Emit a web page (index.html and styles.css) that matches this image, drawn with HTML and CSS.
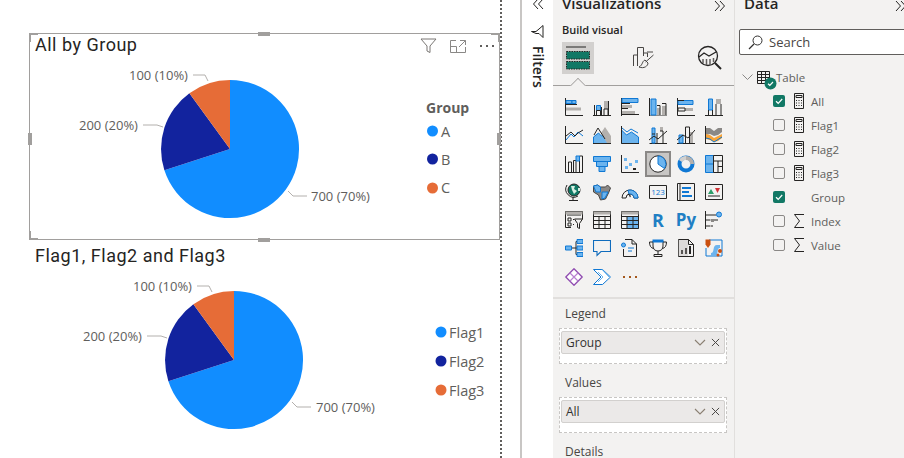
FILE: index.html
```html
<!DOCTYPE html>
<html lang="en">
<head>
    <meta charset="UTF-8">
    <title>Report view</title>
    <link rel="stylesheet" href="styles.css">
</head>
<body>
<svg class="defs" width="0" height="0">
    <symbol id="calc" viewBox="0 0 12 16">
        <path d="M1.5.5h9v15h-9z" fill="none" stroke="#252423"/>
        <path d="M3 2.500h6v2H3z" fill="none" stroke="#252423"/>
        <path d="M3 7h1v1H3zM5.500 7h1v1h-1zM8 7h1v1H8zM3 9.500h1v1H3zM5.500 9.500h1v1h-1zM8 9.500h1v1H8zM3 12h1v1H3zM5.500 12h1v1h-1zM8 12h1v1H8z" fill="#252423"/>
    </symbol>
    <symbol id="sigma" viewBox="0 0 12 16">
        <path d="M11 1.500H1.500l5 6.500-5 6.500H11" fill="none" stroke="#252423"/>
    </symbol>
    <symbol id="drop" viewBox="0 0 12 8">
        <path d="M1 1l5 5 5-5" fill="none" stroke="#8a7f72" stroke-width="1.100"/>
    </symbol>
    <symbol id="cross" viewBox="0 0 10 10">
        <path d="M1 1l8 8M9 1l-8 8" fill="none" stroke="#484644" stroke-width="1.100"/>
    </symbol>
    <symbol id="tick" viewBox="0 0 12 12">
        <rect width="12" height="12" rx="2" fill="#117865"/>
        <path d="M3 6.200l2.200 2.100L9.200 4" fill="none" stroke="#fff" stroke-width="1.200"/>
    </symbol>
</svg>

<!-- Report canvas -->
<main class="canvas">
    <section class="visual selected">
        <span class="corner tl"></span>
        <span class="corner tr"></span>
        <span class="corner bl"></span>
        <span class="grip top"></span>
        <span class="grip bottom"></span>
        <span class="grip left"></span>
        <span class="grip right"></span>
        <div class="visual-head">
            <h2 class="visual-title">All by Group</h2>
            <div class="visual-tools">
                <svg width="17" height="16" viewBox="0 0 17 16"><path d="M1 1h15l-6 7v6.500l-3-1.500V8z" fill="none" stroke="#7a7774"/></svg>
                <svg width="16" height="13" viewBox="0 0 16 13"><path d="M6 .5H.5v12h15V7M.5 6.500h6v6M10 .5h5.500V5M15.500.5L9 7" fill="none" stroke="#8a8886"/></svg>
                <svg width="16" height="4" viewBox="0 0 16 4"><path d="M1 1h2v2H1zM7 1h2v2H7zM13 1h2v2h-2z" fill="#605e5c"/></svg>
            </div>
        </div>
        <svg class="chart" width="470" height="170" viewBox="29 67 470 170">
            <path d="M230 149V80A69 69 0 1 1 164.400 170.300z" fill="#118dff"/>
            <path d="M230 149L164.400 170.300A69 69 0 0 1 189.400 93.200z" fill="#12239e"/>
            <path d="M230 149L189.400 93.200A69 69 0 0 1 230 80z" fill="#e66c37"/>
            <path class="leader" d="M193 75h12l3 6M143 125h14l6 2M288 191l5 5h14"/>
            <text class="label" x="129" y="80">100 (10%)</text>
            <text class="label" x="79" y="130">200 (20%)</text>
            <text class="label" x="311" y="201">700 (70%)</text>
            <text class="legend-head" x="426" y="113">Group</text>
            <circle cx="432.500" cy="131" r="5.500" fill="#118dff"/>
            <text class="legend" x="441" y="137">A</text>
            <circle cx="432.500" cy="159" r="5.500" fill="#12239e"/>
            <text class="legend" x="441" y="165">B</text>
            <circle cx="432.500" cy="188" r="5.500" fill="#e66c37"/>
            <text class="legend" x="441" y="193">C</text>
        </svg>
    </section>
    <section class="visual">
        <div class="visual-head">
            <h2 class="visual-title">Flag1, Flag2 and Flag3</h2>
        </div>
        <svg class="chart" width="470" height="170" viewBox="29 278 470 170">
            <path d="M234 360V291A69 69 0 1 1 168.400 381.300z" fill="#118dff"/>
            <path d="M234 360L168.400 381.300A69 69 0 0 1 193.400 304.200z" fill="#12239e"/>
            <path d="M234 360L193.400 304.200A69 69 0 0 1 234 291z" fill="#e66c37"/>
            <path class="leader" d="M197 286h12l3 6M147 336h14l6 2M292 402l5 5h14"/>
            <text class="label" x="133" y="291">100 (10%)</text>
            <text class="label" x="83" y="341">200 (20%)</text>
            <text class="label" x="316" y="412">700 (70%)</text>
            <circle cx="441" cy="332" r="5.500" fill="#118dff"/>
            <text class="legend" x="449" y="338">Flag1</text>
            <circle cx="441" cy="361" r="5.500" fill="#12239e"/>
            <text class="legend" x="449" y="367">Flag2</text>
            <circle cx="441" cy="390" r="5.500" fill="#e66c37"/>
            <text class="legend" x="449" y="396">Flag3</text>
        </svg>
    </section>
</main>

<!-- Filters pane (collapsed) -->
<aside class="filters">
    <svg class="chev-back" width="12" height="10" viewBox="0 0 12 10"><path d="M6 0L1.500 5 6 10M11 0L6.500 5 11 10" fill="none" stroke="#252423"/></svg>
    <svg width="13" height="13" viewBox="0 0 13 13"><path d="M12 .5v12L8 8.500H5L.5 6.500H5L8 4z" fill="none" stroke="#252423"/></svg>
    <span class="filters-label">Filters</span>
</aside>

<!-- Visualizations pane -->
<aside class="viz">
    <div class="pane-head">
        <h1>Visualizations</h1>
        <svg width="12" height="10" viewBox="0 0 12 10"><path d="M1 0l4.500 5L1 10M6 0l4.500 5L6 10" fill="none" stroke="#252423"/></svg>
    </div>
    <div class="build-label">Build visual</div>
    <div class="tabs">
        <div class="tab active">
            <svg width="26" height="26" viewBox="0 0 26 26">
                <path d="M1 2h20" stroke="#252423"/>
                <rect x="1.500" y="6.500" width="23" height="7.500" fill="#117865" stroke="#252423" stroke-dasharray="1.500 1"/>
                <rect x="1.500" y="16.500" width="23" height="7.500" fill="#117865" stroke="#252423" stroke-dasharray="1.500 1"/>
            </svg>
        </div>
        <div class="tab">
            <svg width="24" height="24" viewBox="0 0 24 24" fill="none" stroke="#484644">
                <path d="M1.500 20v-11h4v11M5.500 15V1.500h6V10M11.500 7h4v4M15 6h6"/>
                <path d="M21.500 9l-8 7M13 14c-3 1-2 5-6 7 5 2 9-1 9-4z"/>
            </svg>
        </div>
        <div class="tab">
            <svg width="26" height="26" viewBox="0 0 26 26" fill="none" stroke="#252423">
                <circle cx="11" cy="11" r="9.500" stroke-width="1.300"/>
                <path d="M2 12l5-4 5 3 7-4" stroke-width="1.300"/>
                <path d="M6 14v4M9.500 14v6M13 14v6M16.500 13v4" stroke="#605e5c" stroke-width="1.500"/>
                <path d="M18 18l6 6" stroke-width="2"/>
            </svg>
        </div>
        <span class="notch"></span>
    </div>

    <div class="icon-grid">
        <svg viewBox="0 0 18 18"><path class="ax" d="M.5 0v17.500H18"/><path class="bl" d="M1 2.500h6v3H1z"/><path class="bl" d="M7 2.500h4v3H7z"/><path class="gr" d="M1 9.500h8v3H1zM9 9.500h7v3H9z"/><path class="ax" d="M.5 6.500H12"/></svg>
        <svg viewBox="0 0 18 18"><path class="ax" d="M0 17.500h18M1.500 7v10.500M8.500 9v8.500M15.500 3v14.500"/><path class="bl" d="M3.500 7.500h4v5h-4z"/><path class="ax" d="M3.500 12.500h4v5h-4z"/><path class="gr" d="M11 3h4v8h-4z"/><path class="ax" d="M11 11h4v6.500h-4z"/></svg>
        <svg viewBox="0 0 18 18"><path class="ax" d="M.5 0v18"/><path class="bl" d="M1 .5h16v4H1z"/><path class="gr" d="M1 7h10v3H1zM1 13h13v3H1z"/><path class="ax" d="M1 5.500h8M1 10.500h6M1 16.500h17"/></svg>
        <svg viewBox="0 0 18 18"><path class="ax" d="M.5 0v18H18"/><path class="bl" d="M2 1h5v16H2z"/><path class="gr" d="M8 10h3v7H8zM13 8h4v9h-4z"/><path class="ax" d="M8 7.500h3V17M13 5.500h4V17"/></svg>
        <svg viewBox="0 0 18 18"><path class="ax" d="M.5 0v17.500H18"/><path class="bl" d="M1 2.500h15v4H1z"/><path class="gr" d="M8 10h8v3H8z"/><path class="ax" d="M1 2.500h6M1 13h7V10H1z"/></svg>
        <svg viewBox="0 0 18 18"><path class="ax" d="M0 17.500h18"/><path class="bl" d="M3.500 1h4v11h-4z"/><path class="ax" d="M3.500 12v5.500h4V12"/><path class="gr" d="M11 1h5v5h-5z"/><path class="ax" d="M11 6v11.500h5V6"/></svg>

        <svg viewBox="0 0 18 18"><path class="ax" d="M.5 0v17.500H18"/><path class="ln" d="M1 14l5-6 3 3 4-5 5 4"/><path class="ax" d="M1 10l5-4 4 4 3-3 5-3"/></svg>
        <svg viewBox="0 0 18 18"><path class="bl" d="M.5 17.500V11l5-4 3 3 4-1 5 5v3.500z"/><path class="gr" d="M8 7l4-6 6 9v7h-4z"/><path class="ax" d="M1 9l4-7 7 11"/><path class="ax" d="M0 17.500h18"/></svg>
        <svg viewBox="0 0 18 18"><path class="bl" d="M.5 4l5 5 5-3 7 5v6.500H.500z"/><path class="ax" d="M.5 0v17.500H18"/><path class="ln" d="M1 2l5 4 4-3 7 4"/></svg>
        <svg viewBox="0 0 18 18"><path class="ax" d="M.5 17.500H18"/><path class="bl" d="M3 2h3v15H3z"/><path class="gr" d="M11 1h3v4h-3z"/><path class="ax" d="M3 8h3M11 5h3v12.500M8 17V7"/><path class="ax" d="M0 14l5-4 4 3 9-8"/></svg>
        <svg viewBox="0 0 18 18"><path class="ax" d="M0 17.500h18"/><path class="bl" d="M2 9h4v8H2z"/><path class="ax" d="M8.500 17V1h4v16"/><path class="gr" d="M13 6h3v11h-3z"/><path class="ax" d="M0 14l6-5 5 3 7-8"/></svg>
        <svg viewBox="0 0 18 18"><path class="ax" d="M.5 0v18M0 17.500h18"/><path d="M1 2h4l4 3 4-3h4v4l-4 3-4 1-4-2-4 1z" fill="#8a8886"/><path d="M1 8l4 1 4 3 4-2 4-2v4l-4 3-4 1-4-2-4-1z" fill="#f7a43a"/><path class="ln" d="M1 12l4 1 4 3 8-5"/></svg>

        <svg viewBox="0 0 18 18"><path class="ax" d="M.5 1v16.500H18M3.500 17V7h3v10M8.500 17V5.500H11V17M14.500 17V1h3v16"/><path class="bl" d="M11 1h3.500v5H11z"/></svg>
        <svg viewBox="0 0 18 18"><path class="bl" d="M.5 1.500h17v5H.500zM3.500 6.500h11v5h-11zM6 11.500h6v5H6z"/></svg>
        <svg viewBox="0 0 18 18"><path class="ax" d="M.5 0v17.500H18"/><path d="M3 3h3v3H3zM14 5h3v3h-3zM8 8h3v3H8zM4 11h3v3H4z" fill="#6cb4ee"/><path d="M12 13h3v2h-3z" fill="#252423"/></svg>
        <span class="cell-on"><svg viewBox="0 0 18 18"><circle cx="9" cy="9" r="8.200" fill="#fff" stroke="#252423"/><path class="bl" d="M9 1a8 8 0 0 1 6.500 12.500L9 9z"/></svg></span>
        <svg viewBox="0 0 18 18"><circle cx="9" cy="9" r="6.500" fill="none" stroke="#0f78d4" stroke-width="4"/><path d="M9 1a8 8 0 0 1 8 8h-4a4 4 0 0 0-4-4z" fill="#b3b0ad"/><path d="M9 1a8 8 0 0 0-7 4l3 2a4 4 0 0 1 4-2z" fill="#d2d0ce"/></svg>
        <svg viewBox="0 0 18 18"><path class="bl" d="M.5.500h8v17h-8z"/><path d="M.5 9h8" stroke="#0f78d4"/><path class="ax" d="M8.500.5h9v17h-9zM8.500 6h9M13 6v11.500M13 11.500h4.500"/></svg>

        <svg viewBox="0 0 18 18"><circle cx="9" cy="7" r="6" fill="#117865"/><circle cx="9" cy="7" r="6" fill="none" stroke="#252423"/><path d="M6 3h4l-1 3 3 2-3 3-2-4zM13 5h2v3h-2z" fill="#d8efe2"/><path class="ax" d="M2 2a8 8 0 0 0 11 11M8 14v3M4 17.500h9"/></svg>
        <svg viewBox="0 0 18 18"><path d="M.5 3l4-1 3 2h5l2-2 3 3-2 5-3 6-5 1-2-5-5-3z" fill="#8a8886" stroke="#484644"/><path d="M.5 3l4-1 3 2v5H3z" fill="#6cb4ee" stroke="#0f78d4"/><path d="M9 9h6l-3 6-3 1z" fill="#6cb4ee" stroke="#0f78d4"/></svg>
        <svg viewBox="0 0 18 18"><path class="ax" d="M1 15a8 8 0 0 1 16 0h-4a4 4 0 0 0-8 0z"/><path class="bl" d="M7 7.200a8 8 0 0 1 10 7.800h-4a4 4 0 0 0-5-4z"/><path d="M7 10l3 3-1 1.500z" fill="#252423"/></svg>
        <svg viewBox="0 0 18 18"><path class="ax" d="M.5 2.500h17v13H.500z"/><text class="tile-num" x="9" y="12" text-anchor="middle">123</text></svg>
        <svg viewBox="0 0 18 18"><path class="ax" d="M.5.500h17v17H.500z"/><path d="M3 1v16" stroke="#252423"/><path d="M5 4h9v2H5zM5 8h7v2H5zM5 12h10v2H5z" fill="#0f78d4"/></svg>
        <svg viewBox="0 0 18 18"><path class="ax" d="M.5 1.500h17v15H.500z"/><path d="M3 11l3-5 3 5z" fill="#2e9e6a"/><path d="M10 5h5l-2.500 5z" fill="#d13438"/><path d="M3 13h12" stroke="#252423"/></svg>

        <svg viewBox="0 0 18 18"><path class="ax" d="M.5 16.500V.5h17V8M.5 16.500H6M2 4h14"/><path d="M.5.500h17v3H.500z" fill="#b3b0ad"/><path class="ax" d="M3 7h3v3H3zM3 12h3v3H3zM8 8.500h1M8 13.500h1M9.500 8h8l-3 4.500v5l-2-1v-4z"/></svg>
        <svg viewBox="0 0 18 18"><path class="ax" d="M.5.500h17v17H.500zM.5 5.500h17M.5 9.500h17M.5 13.500h17M6 5.500v12M12 5.500v12"/><path d="M.5.500h17v3H.500z" fill="#b3b0ad"/></svg>
        <svg viewBox="0 0 18 18"><path d="M6 6h12v12H6z" fill="#6cb4ee"/><path class="ax" d="M.5.500h17v17H.500zM.5 5.500h17M.5 9.500h17M.5 13.500h17M6 5.500v12M12 5.500v12"/><path d="M.5.500h17v3H.500z" fill="#b3b0ad"/></svg>
        <span class="glyph">R</span>
        <span class="glyph py">Py</span>
        <svg viewBox="0 0 18 18"><path class="ax" d="M.5 0v18M.5 4h11M.5 9h5M8 9h5M.5 15h5"/><circle cx="14" cy="3.500" r="2.500" fill="#6cb4ee" stroke="#0f78d4"/><path d="M6 8h3v3H6z" fill="#8a8886"/><path d="M6 14h2v2H6z" fill="#8a8886"/></svg>

        <svg viewBox="0 0 18 18"><path class="ax" d="M7 9h4M11 2.500v13M11 2.500h2M11 9h2M11 15.500h2"/><path class="bl" d="M.5 7h6v4h-6zM12 .5h6v4h-6zM12 7h6v4h-6zM12 13.500h6v4h-6z"/></svg>
        <svg viewBox="0 0 18 18"><path d="M.5 1.500h17v11H8l-4 4v-4H.500z" fill="none" stroke="#0f6cbd" stroke-width="1.100"/></svg>
        <svg viewBox="0 0 18 18"><path class="ax" d="M2.500 10v7.500h13V5L11 .5H4M11 .5V5h4.500"/><circle cx="2.500" cy="6" r="2" fill="#6cb4ee" stroke="#0f78d4"/><path class="ln" d="M7 9h6M7 12h4"/></svg>
        <svg viewBox="0 0 18 18"><path class="ax" d="M4 3H.5c0 4 1.500 6 4 6.500M14 3h3.500c0 4-1.500 6-4 6.500M4 2v5c0 3 2 5 5 5s5-2 5-5V2M9 12v3M5 17.500h8v-2H5z"/><path d="M3.500.5h11v3h-11z" fill="#0f78d4"/></svg>
        <svg viewBox="0 0 18 18"><path class="ax" d="M1.500.5h10l5 5v12h-15zM11.500.5v5h5"/><path d="M4 11h2v4H4zM8 9h2v6H8zM12 7h2v8h-2z" fill="#252423"/><path d="M1 1h10v16H1z" fill="#b3b0ad" opacity=".35"/></svg>
        <svg viewBox="0 0 18 18"><path d="M4 1h13v16H1V9" fill="none" stroke="#0f78d4"/><path d="M6 14c4 0 1-8 6-8h3v3c-4 0-1 8-5 8H6z" fill="#6cb4ee"/><path d="M.5.500h5v5L3 9 .5 5.500z" fill="#ca5010"/><circle cx="15" cy="12" r="2" fill="#ca5010"/><circle cx="13" cy="16" r="1.500" fill="#ca5010"/></svg>

        <svg viewBox="0 0 18 18"><path d="M9 .8L17.200 9 9 17.200.8 9z" fill="#fff" stroke="#8f4bb0" stroke-width="1.300" stroke-linejoin="round"/><path d="M5 5l8 8M13 5l-8 8" stroke="#b882d0" stroke-width="1.200"/></svg>
        <svg viewBox="0 0 18 18"><path d="M.5 1.500h9l8 7.500-8 7.500h-9L8 9z" fill="#fff" stroke="#0f78d4"/><path d="M5 4l5 5-5 5M9 1.500l7 7.500" fill="none" stroke="#6cb4ee"/></svg>
        <svg viewBox="0 0 18 18"><path d="M2 8h2v2H2zM8 8h2v2H8zM14 8h2v2h-2z" fill="#a4581c"/></svg>
    </div>

    <div class="wells">
        <div class="well-label">Legend</div>
        <div class="well">
            <div class="pill">Group
                <svg class="pill-drop" width="12" height="8"><use href="#drop"/></svg>
                <svg width="9" height="9"><use href="#cross"/></svg>
            </div>
        </div>
        <div class="well-label">Values</div>
        <div class="well">
            <div class="pill">All
                <svg class="pill-drop" width="12" height="8"><use href="#drop"/></svg>
                <svg width="9" height="9"><use href="#cross"/></svg>
            </div>
        </div>
        <div class="well-label">Details</div>
    </div>
</aside>

<!-- Data pane -->
<aside class="data">
    <div class="pane-head">
        <h1>Data</h1>
        <svg width="12" height="10" viewBox="0 0 12 10"><path d="M1 0l4.500 5L1 10M6 0l4.500 5L6 10" fill="none" stroke="#252423"/></svg>
    </div>
    <div class="search">
        <svg width="15" height="15" viewBox="0 0 15 15" fill="none" stroke="#323130"><circle cx="9.500" cy="5.500" r="4.500"/><path d="M6 9l-5 5" stroke-width="1.200"/></svg>
        <span>Search</span>
    </div>
    <ul class="fields">
        <li class="table-row">
            <svg width="11" height="6" viewBox="0 0 11 6"><path d="M.5.500l5 5 5-5" fill="none" stroke="#8a8886"/></svg>
            <span class="table-icon">
                <svg width="13" height="13" viewBox="0 0 13 13" fill="none" stroke="#252423"><path d="M.5.500h12v12H.500zM.5 3.500h12M.5 6.500h12M.5 9.500h12M4.500.5v12M8.500.5v12"/></svg>
                <svg class="badge" width="13" height="13" viewBox="0 0 13 13"><circle cx="6.500" cy="6.500" r="6" fill="#117865"/><path d="M4 6.700l1.800 1.600L9 5" fill="none" stroke="#fff" stroke-width="1.200"/></svg>
            </span>
            Table
        </li>
        <li><svg class="check" width="12" height="12"><use href="#tick"/></svg><svg class="kind" width="12" height="16"><use href="#calc"/></svg>All</li>
        <li><span class="box"></span><svg class="kind" width="12" height="16"><use href="#calc"/></svg>Flag1</li>
        <li><span class="box"></span><svg class="kind" width="12" height="16"><use href="#calc"/></svg>Flag2</li>
        <li><span class="box"></span><svg class="kind" width="12" height="16"><use href="#calc"/></svg>Flag3</li>
        <li><svg class="check" width="12" height="12"><use href="#tick"/></svg><span class="kind"></span>Group</li>
        <li><span class="box"></span><svg class="kind" width="12" height="16"><use href="#sigma"/></svg>Index</li>
        <li><span class="box"></span><svg class="kind" width="12" height="16"><use href="#sigma"/></svg>Value</li>
    </ul>
</aside>
</body>
</html>
```

FILE: styles.css
```css
* {
    box-sizing: border-box;
    margin: 0;
    padding: 0;
}

body {
    width: 904px;
    height: 458px;
    overflow: hidden;
    display: flex;
    background: #fff;
    font-family: "Open Sans", "Noto Sans", sans-serif;
    color: #252423;
}

.defs {
    position: absolute;
}

/* Report canvas */
.canvas {
    width: 502px;
    height: 458px;
    padding: 33px 0 0 29px;
    border-right: 2px dotted #605e5c;
}

.visual {
    position: relative;
    width: 471px;
    height: 207px;
    margin-bottom: 4px;
}

.visual.selected {
    border: 1px solid #a19f9d;
}

.visual-head {
    height: 33px;
    padding: 0 4px 0 5px;
    display: flex;
    justify-content: space-between;
}

.visual:not(.selected) .visual-head {
    height: 34px;
    padding: 1px 0 0 6px;
}

.visual-title {
    font-family: "Roboto", sans-serif;
    font-size: 18px;
    font-weight: 400;
    line-height: 22px;
    letter-spacing: 0.5px;
    color: #252423;
}

.visual-tools {
    display: flex;
    align-items: center;
    gap: 13px;
    height: 24px;
}

.chart {
    display: block;
}

.selected .chart {
    margin-left: -1px;
}

.label {
    font-size: 13px;
    fill: #605e5c;
}

.legend {
    font-size: 14.5px;
    fill: #605e5c;
}

.legend-head {
    font-size: 14px;
    font-weight: 700;
    fill: #605e5c;
}

.leader {
    fill: none;
    stroke: #b3b0ad;
}

/* Selection handles sit over the visual border */
.corner {
    position: absolute;
    width: 9px;
    height: 9px;
    border: 0 solid #a19f9d;
}

.corner.tl {
    top: -1px;
    left: -1px;
    border-width: 2px 0 0 2px;
}

.corner.tr {
    top: -1px;
    right: -1px;
    border-width: 2px 2px 0 0;
}

.corner.bl {
    bottom: -1px;
    left: -1px;
    border-width: 0 0 2px 2px;
}

.grip {
    position: absolute;
    background: #a19f9d;
}

.grip.top,
.grip.bottom {
    left: 228px;
    width: 12px;
    height: 4px;
}

.grip.top {
    top: -2px;
}

.grip.bottom {
    bottom: -3px;
}

.grip.left,
.grip.right {
    top: 99px;
    width: 4px;
    height: 12px;
}

.grip.left {
    left: -2px;
}

.grip.right {
    right: -2px;
}

/* Filters pane */
.filters {
    width: 33px;
    height: 458px;
    margin-left: 18px;
    border-left: 2px solid #c8c6c4;
    display: flex;
    flex-direction: column;
    align-items: center;
    background: #fff;
}

.chev-back {
    margin: -1px 0 16px;
}

.filters-label {
    writing-mode: vertical-rl;
    margin-top: 8px;
    font-size: 14px;
    font-weight: 600;
    line-height: 14px;
    color: #252423;
}

/* Visualizations pane */
.viz {
    width: 182px;
    height: 458px;
    padding-left: 9px;
    background: #f3f2f1;
    border-right: 1px solid #e1dfdd;
}

.pane-head {
    height: 20px;
    margin-top: -7px;
    display: flex;
    justify-content: space-between;
    align-items: center;
    padding-right: 8px;
}

.pane-head h1 {
    font-size: 15px;
    font-weight: 600;
    line-height: 20px;
}

.pane-head svg {
    margin-top: 6px;
}

.build-label {
    margin-top: 9px;
    font-size: 11px;
    font-weight: 600;
    line-height: 16px;
}

.tabs {
    position: relative;
    height: 44px;
    margin: 4px 0 0 -9px;
    padding-left: 9px;
    display: flex;
    gap: 34px;
    border-bottom: 1px solid #a19f9d;
}

.tab {
    flex: none;
    width: 32px;
    height: 32px;
    display: flex;
    align-items: center;
    justify-content: center;
}

.tab.active {
    background: #d2d0ce;
}

.notch {
    position: absolute;
    left: 19px;
    bottom: -7px;
    width: 12px;
    height: 12px;
    background: #f3f2f1;
    border: 1px solid #a19f9d;
    border-width: 1px 0 0 1px;
    transform: rotate(45deg);
    clip-path: polygon(0 0, 100% 0, 0 100%);
}

.icon-grid {
    display: grid;
    grid-template-columns: repeat(6, 18px);
    grid-auto-rows: 18px;
    column-gap: 10px;
    row-gap: 10.3px;
    margin: 12px 0 0 3px;
    height: 199px;
}

.icon-grid svg {
    display: block;
    width: 18px;
    height: 18px;
}

.ax {
    fill: none;
    stroke: #252423;
}

.ln {
    fill: none;
    stroke: #0f78d4;
}

.bl {
    fill: #6cb4ee;
    stroke: #0f78d4;
}

.gr {
    fill: #b3b0ad;
}

.tile-num {
    font-size: 8px;
    fill: #0f78d4;
}

.cell-on {
    display: block;
    width: 18px;
    height: 18px;
    outline: 2px solid #8a8886;
    outline-offset: 2px;
    background: #c8c6c4;
    box-shadow: 0 0 0 3px #c8c6c4;
}

.glyph {
    font-size: 18px;
    font-weight: 700;
    line-height: 18px;
    text-align: center;
    color: #1f7fc4;
}

.glyph.py {
    font-size: 17px;
    margin: 0 -3px;
}

/* Field wells */
.wells {
    margin: 0 0 0 -9px;
    padding: 7px 7px 0 6px;
    border-top: 2px solid #e1dfdd;
}

.well-label {
    padding-left: 6px;
    font-size: 12px;
    line-height: 16px;
    color: #484644;
}

.well {
    height: 36px;
    margin: 6px 0 11px;
    padding: 2px 1px;
    background: #fff;
    border: 1px dashed #c8c6c4;
}

.pill {
    height: 23px;
    padding: 0 4px;
    display: flex;
    align-items: center;
    background: #ebe9e8;
    border: 1px solid #d2d0ce;
    border-radius: 2px;
    font-size: 12px;
    color: #323130;
}

.pill-drop {
    margin: 0 5px 0 auto;
}

/* Data pane */
.data {
    flex: 1;
    height: 458px;
    padding-left: 4px;
    background: #f3f2f1;
    overflow: hidden;
}

.data .pane-head {
    padding: 0 0 0 5px;
}

.data .pane-head svg {
    flex: none;
    margin-right: -3px;
}

.search {
    width: 180px;
    height: 26px;
    margin-top: 16px;
    padding-left: 8px;
    display: flex;
    align-items: center;
    gap: 6px;
    background: #fff;
    border: 1px solid #605e5c;
    border-radius: 2px;
    font-size: 13px;
    color: #484644;
}

.fields {
    list-style: none;
    margin-top: 10px;
    padding-left: 34px;
}

.fields li {
    height: 24px;
    display: flex;
    align-items: center;
    font-size: 11.5px;
    color: #605e5c;
}

.fields .table-row {
    margin-left: -31px;
}

.table-row > svg {
    margin-right: 4px;
}

.table-icon {
    position: relative;
    width: 19px;
    height: 13px;
}

.badge {
    position: absolute;
    left: 7px;
    top: 6px;
}

.box {
    width: 12px;
    height: 12px;
    border: 1px solid #8a8886;
    border-radius: 2px;
}

.kind {
    width: 12px;
    height: 16px;
    margin: 0 6px 0 8px;
}
```
